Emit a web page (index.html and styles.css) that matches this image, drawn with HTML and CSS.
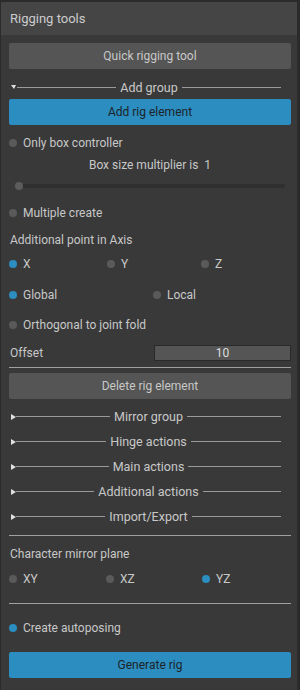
FILE: index.html
```html
<!DOCTYPE html>
<html lang="en">
<head>
    <meta charset="UTF-8">
    <meta name="viewport" content="width=device-width, initial-scale=1.0">
    <title>Rigging tools</title>
    <link rel="stylesheet" href="styles.css">
</head>
<body>
    <div class="panel">
        <!-- header -->
        <div class="panel-header">Rigging tools</div>
        <div class="panel-body">
            <button class="btn">Quick rigging tool</button>

            <!-- Add group (open) -->
            <div class="group-row open">
                <span class="arrow"></span>
                <span class="line"></span>
                <span class="group-title">Add group</span>
                <span class="line"></span>
            </div>
            <button class="btn btn-blue">Add rig element</button>

            <div class="radio-row first"><span class="dot"></span>Only box controller</div>
            <div class="center-label">Box size multiplier is &nbsp;1</div>
            <div class="slider">
                <div class="slider-track"></div>
                <div class="slider-handle"></div>
            </div>
            <div class="radio-row multi"><span class="dot"></span>Multiple create</div>
            <div class="label-row">Additional point in Axis</div>
            <div class="choice-row three">
                <div class="radio-row"><span class="dot on"></span>X</div>
                <div class="radio-row"><span class="dot"></span>Y</div>
                <div class="radio-row"><span class="dot"></span>Z</div>
            </div>
            <div class="choice-row two space">
                <div class="radio-row"><span class="dot on"></span>Global</div>
                <div class="radio-row"><span class="dot"></span>Local</div>
            </div>
            <div class="radio-row ortho"><span class="dot"></span>Orthogonal to joint fold</div>
            <div class="field-row">
                <span class="field-label">Offset</span>
                <div class="field-input">10</div>
            </div>
            <div class="sep sep-offset"></div>
            <button class="btn btn-delete">Delete rig element</button>

            <!-- collapsed groups -->
            <div class="groups">
                <div class="group-row"><span class="arrow"></span><span class="line"></span><span class="group-title">Mirror group</span><span class="line"></span></div>
                <div class="group-row"><span class="arrow"></span><span class="line"></span><span class="group-title">Hinge actions</span><span class="line"></span></div>
                <div class="group-row"><span class="arrow"></span><span class="line"></span><span class="group-title">Main actions</span><span class="line"></span></div>
                <div class="group-row"><span class="arrow"></span><span class="line"></span><span class="group-title">Additional actions</span><span class="line"></span></div>
                <div class="group-row"><span class="arrow"></span><span class="line"></span><span class="group-title">Import/Export</span><span class="line"></span></div>
            </div>
            <div class="sep sep-groups"></div>

            <div class="label-row mirror-label">Character mirror plane</div>
            <div class="choice-row three mirror">
                <div class="radio-row"><span class="dot"></span>XY</div>
                <div class="radio-row"><span class="dot"></span>XZ</div>
                <div class="radio-row"><span class="dot on"></span>YZ</div>
            </div>
            <div class="sep sep-mirror"></div>
            <div class="radio-row autopose"><span class="dot on"></span>Create autoposing</div>
            <button class="btn btn-blue btn-generate">Generate rig</button>
        </div>
    </div>
</body>
</html>
```

FILE: styles.css
```css
/* base */
body {
    margin: 0;
    background: #2b2b2b;
    font-family: Roboto, 'Noto Sans', sans-serif;
    font-size: 12px;
    color: #c8c8c8;
    height: 690px;
    overflow: hidden;
}
.panel {
    margin: 2px 3px 0 1px;
    background: #393939;
    height: 688px;
}
.panel-header {
    height: 33px;
    line-height: 33px;
    padding-left: 9px;
    background: #454545;
    font-size: 13px;
    color: #cccccc;
}
.panel-body {
    display: flex;
    flex-direction: column;
    padding: 8px 6px 0 8px;
}
/* buttons */
.btn {
    height: 26px;
    border: none;
    border-radius: 2px;
    background: #555555;
    color: #c8c8c8;
    font-family: inherit;
    font-size: 12px;
    padding: 0;
}
.btn-blue {
    background: #2b8dc0;
    color: #1e2328;
}
.btn-delete { margin-top: 5px; }
.btn-generate { margin-top: 12px; }
/* group rows */
.group-row {
    display: flex;
    align-items: center;
    height: 25px;
    padding-right: 10px;
}
.group-row.open {
    height: 24px;
    margin-top: 6px;
}
.arrow {
    width: 0;
    height: 0;
    margin-left: 2px;
    border-top: 3px solid transparent;
    border-bottom: 3px solid transparent;
    border-left: 5px solid #e0e0e0;
}
.group-row.open .arrow {
    border-left: 3px solid transparent;
    border-right: 2px solid transparent;
    border-top: 4px solid #e0e0e0;
    border-bottom: none;
    width: 0;
    margin-right: 1px;
}
.line {
    flex: 1;
    height: 1px;
    background: #9a9a9a;
}
.group-title {
    padding: 0 4px;
    font-size: 12.5px;
}
.groups {
    margin-top: 5px;
}
/* radio rows */
.radio-row {
    display: flex;
    align-items: center;
    height: 24px;
    font-size: 12px;
}
.dot {
    width: 8px;
    height: 8px;
    border-radius: 50%;
    background: #5a5a5a;
    margin-right: 6px;
    flex: none;
}
.dot.on { background: #2b8dc0; }
.radio-row.first { margin-top: 6px; }
.radio-row.multi { margin-top: 4px; }
.radio-row.ortho { margin-top: 6px; }
.radio-row.autopose { margin-top: 12px; }
.choice-row { display: grid; }
.choice-row.three { grid-template-columns: 98px 94px 1fr; }
.choice-row.two { grid-template-columns: 144px 1fr; }
.choice-row.space { margin-top: 7px; }
.choice-row.mirror { margin-top: 1px; grid-template-columns: 97px 96px 1fr; }
/* labels */
.center-label {
    height: 20px;
    line-height: 20px;
    text-align: center;
}
.label-row {
    height: 24px;
    line-height: 24px;
    margin-top: 3px;
    padding-left: 1px;
}
.mirror-label { margin-top: 6px; }
/* slider */
.slider {
    position: relative;
    height: 22px;
}
.slider-track {
    position: absolute;
    left: 7px;
    right: 6px;
    top: 9px;
    height: 4px;
    border-radius: 2px;
    background: #2f2f2f;
}
.slider-handle {
    position: absolute;
    left: 6px;
    top: 7px;
    width: 8px;
    height: 8px;
    border-radius: 50%;
    background: #5c5c5c;
}
/* offset field */
.field-row {
    display: flex;
    align-items: center;
    height: 16px;
    margin-top: 8px;
}
.field-label {
    width: 144px;
    padding-left: 1px;
}
.field-input {
    flex: 1;
    height: 14px;
    line-height: 14px;
    border: 1px solid #2a2a2a;
    background: #555555;
    text-align: center;
    color: #dddddd;
}
/* separators */
.sep {
    height: 1px;
    background: #a0a0a0;
}
.sep-offset { margin-top: 6px; }
.sep-groups { margin-top: 6px; }
.sep-mirror { margin-top: 12px; }
```
